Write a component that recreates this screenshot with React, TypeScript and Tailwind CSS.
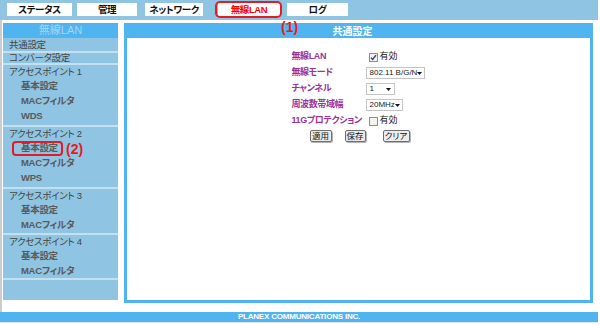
import type { ReactNode } from "react";

const tabs = [
  { label: "ステータス", cls: "ml-[7px] w-[65px]" },
  { label: "管理", cls: "ml-[5px] w-[60px]" },
  { label: "ネットワーク", cls: "ml-[8px] w-[58px]" },
  { label: "無線LAN", cls: "ml-[15px] w-[62px]", active: true },
  { label: "ログ", cls: "ml-[7px] w-[61px]" },
];

const sections = [
  { title: "アクセスポイント 1", items: ["基本設定", "MACフィルタ", "WDS"], h: "h-[62px]" },
  { title: "アクセスポイント 2", items: ["基本設定", "MACフィルタ", "WPS"], h: "h-[62px]", mark: true },
  { title: "アクセスポイント 3", items: ["基本設定", "MACフィルタ"], h: "h-[46px]" },
  { title: "アクセスポイント 4", items: ["基本設定", "MACフィルタ"], h: "h-[45px]" },
];

function Checkbox({ checked }: { checked?: boolean }) {
  return (
    <svg width="9" height="9" viewBox="0 0 9 9" className="shrink-0">
      <rect x="0.5" y="0.5" width="8" height="8" fill="#f3f3f3" stroke="#8c8c8c" />
      {checked && (
        <path d="M2 4.6 L3.7 6.5 L7 2.2" fill="none" stroke="#2c3e6b" strokeWidth="1.3" />
      )}
    </svg>
  );
}

function Select({ value, cls }: { value: string; cls: string }) {
  return (
    <div
      className={`flex h-[12px] items-center justify-between whitespace-nowrap border border-[#c4c4c4] bg-white pl-[3px] pr-[3px] text-[8px] leading-none text-[#222] ${cls}`}
    >
      <span>{value}</span>
      <svg width="5" height="3" viewBox="0 0 5 3" className="shrink-0">
        <path d="M0 0 H5 L2.5 3 Z" fill="#111" />
      </svg>
    </div>
  );
}

function Label({ children }: { children: ReactNode }) {
  return (
    <div className="flex h-[16px] items-center whitespace-nowrap text-[9px] font-bold tracking-[-0.4px] text-[#993399]">
      {children}
    </div>
  );
}

function Btn({ children, cls }: { children: ReactNode; cls: string }) {
  return (
    <div
      className={`flex h-[12px] items-center justify-center whitespace-nowrap rounded-[2px] border border-[#6f6f6f] bg-[#ececec] text-[8.5px] leading-none text-[#111] shadow-[1px_1px_0_#b5b5b5] ${cls}`}
    >
      {children}
    </div>
  );
}

export default function App() {
  return (
    <div className="flex h-[325px] w-[600px] flex-col overflow-hidden bg-white font-['Liberation_Sans','Noto_Sans_CJK_JP',sans-serif] [font-feature-settings:'palt']">
      {/* top tabs */}
      <div className="relative flex h-[20px] w-[598px] items-start bg-[#8fc4e3] pt-[3px]">
        {tabs.map((t) => (
          <div
            key={t.label}
            className={`relative flex h-[13px] items-center justify-center whitespace-nowrap bg-white text-[9.5px] font-bold leading-none tracking-[-0.4px] ${
              t.active ? "text-[#ff0000]" : "text-[#111]"
            } ${t.cls}`}
          >
            {t.label}
            {t.active && (
              <span className="absolute -bottom-[2px] -left-[3px] -right-[2px] -top-[2px] rounded-[5px] border-2 border-[#e51b23]" />
            )}
          </div>
        ))}
        <span className="absolute left-[281px] top-[20px] text-[14px] font-bold leading-none text-[#e51b23]">
          (1)
        </span>
      </div>

      {/* body */}
      <div className="flex h-[292px] w-[597px] border-l-2 border-[#c9ccd0] pl-[1px] pt-[3px]">
        {/* left menu */}
        <div className="flex h-[277px] w-[115px] shrink-0 flex-col whitespace-nowrap bg-[#8fc4e3] text-[9.5px] leading-none tracking-[-0.3px]">
          <div className="flex h-[15px] items-center justify-center bg-[#4fb4ef] text-[11px] tracking-normal text-[#a9d3ef]">
            無線LAN
          </div>
          <div className="flex h-[15px] items-center border-b-2 border-[#c3e0f1] pl-[6px] text-[#444]">共通設定</div>
          <div className="flex h-[12px] items-center border-b-2 border-[#c3e0f1] pl-[6px] text-[#444]">
            コンバータ設定
          </div>
          {sections.map((s) => (
            <div key={s.title} className={`flex flex-col border-b-2 border-[#c3e0f1] ${s.h}`}>
              <div className="flex h-[13px] items-center pl-[6px] text-[#444]">{s.title}</div>
              {s.items.map((it, i) => (
                <div key={it} className="relative flex h-[15px] items-center pl-[18px] font-bold text-[#5a5a5a]">
                  {it}
                  {s.mark && i === 0 && (
                    <>
                      <span className="absolute left-[9px] top-[1px] h-[15px] w-[51px] rounded-[4px] border-2 border-[#e51b23]" />
                      <span className="absolute left-[63px] top-[2px] text-[14px] font-bold leading-none tracking-normal text-[#e51b23]">
                        (2)
                      </span>
                    </>
                  )}
                </div>
              ))}
            </div>
          ))}
        </div>

        {/* main panel */}
        <div className="ml-[6px] flex h-[280px] w-[469px] shrink-0 flex-col border-[3px] border-[#4fb4ef]">
          <div className="flex h-[12px] items-center justify-center bg-[#4fb4ef] pr-[12px] text-[10px] font-bold leading-none text-white">
            共通設定
          </div>
          <div className="mx-auto mt-[11px] grid grid-cols-[74px_60px]">
            <Label>無線LAN</Label>
            <div className="flex h-[16px] items-center gap-[2px] whitespace-nowrap pl-[3px] text-[9px] text-[#222]">
              <Checkbox checked />
              有効
            </div>
            <Label>無線モード</Label>
            <div className="flex h-[16px] items-center">
              <Select value="802.11 B/G/N" cls="w-[59px]" />
            </div>
            <Label>チャンネル</Label>
            <div className="flex h-[16px] items-center">
              <Select value="1" cls="w-[29px]" />
            </div>
            <Label>周波数帯域幅</Label>
            <div className="flex h-[16px] items-center">
              <Select value="20MHz" cls="w-[37px]" />
            </div>
            <Label>11Gプロテクション</Label>
            <div className="flex h-[16px] items-center gap-[2px] whitespace-nowrap pl-[3px] text-[9px] text-[#222]">
              <Checkbox />
              有効
            </div>
            <div className="col-span-2 mt-[1px] flex pl-[18px]">
              <Btn cls="w-[22px]">適用</Btn>
              <Btn cls="ml-[13px] w-[21px]">保存</Btn>
              <Btn cls="ml-[17px] w-[27px]">クリア</Btn>
            </div>
          </div>
        </div>

        <div className="ml-[4px] h-full w-[3px] bg-[#ededed]" />
      </div>

      {/* footer */}
      <div className="flex h-[10px] w-[598px] items-center justify-center bg-[#4fb4ef] font-['Liberation_Sans',sans-serif] text-[8px] font-bold leading-none tracking-[-0.2px] text-white">
        PLANEX COMMUNICATIONS INC.
      </div>
      <div className="h-[3px] w-[598px] border-t border-[#e4e4e4]" />
    </div>
  );
}
